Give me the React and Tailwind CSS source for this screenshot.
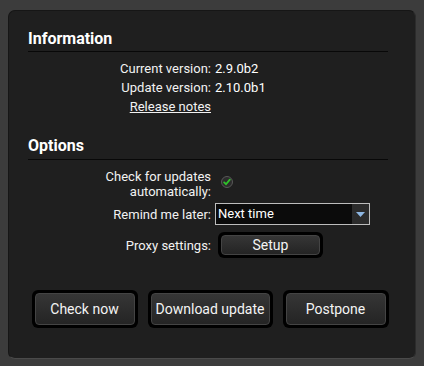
import React from "react";

const DarkButton = ({ children, className = "", inner = "" }) => (
  <div className={`rounded-[6px] bg-black p-[3px] ${className}`}>
    <button
      className={`flex h-full w-full items-center justify-center rounded-[4px] border border-[#444] bg-gradient-to-b from-[#363636] to-[#242424] text-[14px] text-[#f4f4f4] ${inner}`}
    >
      {children}
    </button>
  </div>
);

const Label = ({ children, className = "", leading = "leading-[19px]" }) => (
  <div className={`w-[183px] shrink-0 text-right text-[13px] text-[#f2f2f2] ${leading} ${className}`}>
    {children}
  </div>
);

const App = () => {
  return (
    <div className="h-[366px] w-[424px] bg-[#3c3c3c] pt-[10px] pl-[8px] font-['Roboto',sans-serif]">
      <div className="h-[349px] w-[408px] rounded-[7px] border-t border-l border-b border-r border-t-[#161616] border-l-[#161616] border-b-[#4a4a4a] border-r-[#2c2c2c] bg-[#1f1f1f] pt-[18px] pl-[19px]">
        {/* Information */}
        <div className="w-[360px]">
          <h2 className="border-b border-[#080808] pb-[2px] text-[16px] font-bold leading-[20px] text-white">
            Information
          </h2>
          <div className="mt-[7px] flex flex-col">
            <div className="flex gap-[4px]">
              <Label>Current version:</Label>
              <span className="text-[13px] leading-[19px] text-white">2.9.0b2</span>
            </div>
            <div className="flex gap-[4px]">
              <Label>Update version:</Label>
              <span className="text-[13px] leading-[19px] text-white">2.10.0b1</span>
            </div>
            <div className="flex gap-[4px]">
              <Label className="underline text-[#d6d6d6]">Release notes</Label>
            </div>
          </div>
        </div>

        {/* Options */}
        <div className="mt-[20px] w-[360px]">
          <h2 className="border-b border-[#080808] pb-[3px] text-[16px] font-bold leading-[20px] text-white">
            Options
          </h2>
          <div className="mt-[9px] flex items-center gap-[4px]">
            <Label leading="leading-[15px]">
              Check for updates
              <br />
              automatically:
            </Label>
            <span className="ml-[6px] -mt-[5px] flex h-[12px] w-[12px] items-center justify-center rounded-full border border-[#585858] bg-[#2c2c2c]">
              <svg width="8" height="8" viewBox="0 0 8 8">
                <path d="M1.2 4.4 L3 6.2 L6.8 1.6" fill="none" stroke="#2fc42a" strokeWidth="1.8" strokeLinecap="round" />
              </svg>
            </span>
          </div>
          <div className="mt-[4px] flex items-center gap-[4px]">
            <Label>Remind me later:</Label>
            <div className="flex h-[22px] w-[155px] border border-[#bdbdbd] bg-[#0b0b0b]">
              <span className="flex-1 pl-[2px] text-[13px] leading-[20px] text-white">Next time</span>
              <span className="flex w-[17px] items-center justify-center bg-[#2b2b2b]">
                <svg width="9" height="5" viewBox="0 0 9 5">
                  <path d="M0 0 H9 L4.5 5 Z" fill="#8db6e2" />
                </svg>
              </span>
            </div>
          </div>
          <div className="mt-[7px] flex items-center gap-[4px]">
            <Label>Proxy settings:</Label>
            <DarkButton className="ml-[3px] h-[26px] w-[105px]" inner="rounded-[3px] border-[#3e3e3e] text-[14px]">
              Setup
            </DarkButton>
          </div>
        </div>

        {/* Actions */}
        <div className="mt-[32px] flex w-[370px] justify-center gap-[10px] -ml-[3px]">
          <DarkButton className="h-[38px] w-[106px]">Check now</DarkButton>
          <DarkButton className="h-[38px] w-[125px]">Download update</DarkButton>
          <DarkButton className="h-[38px] w-[106px]">Postpone</DarkButton>
        </div>
      </div>
    </div>
  );
};

export default App;
